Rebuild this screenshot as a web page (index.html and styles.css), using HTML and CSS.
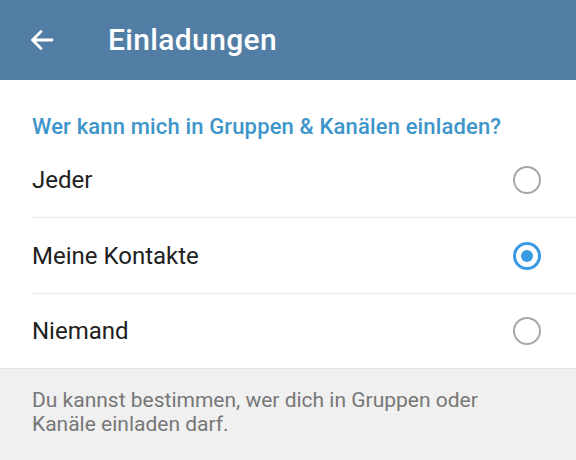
FILE: index.html
```html
<!DOCTYPE html>
<html lang="de">
<head>
<meta charset="utf-8">
<title>Einladungen</title>
<link rel="stylesheet" href="styles.css">
</head>
<body>
  <header class="appbar">
    <button class="back" aria-label="Zurück">
      <svg width="26" height="26" viewBox="0 0 26 26"><path d="M23 13H3.5M12 4.5 3.5 13l8.5 8.5" fill="none" stroke="#fff" stroke-width="2.8" stroke-linecap="round" stroke-linejoin="round"/></svg>
    </button>
    <h1 class="title">Einladungen</h1>
  </header>

  <section class="card">
    <h2 class="section-title">Wer kann mich in Gruppen &amp; Kanälen einladen?</h2>
    <ul class="options">
      <li class="option"><span class="label">Jeder</span><span class="radio"></span></li>
      <li class="option"><span class="label">Meine Kontakte</span><span class="radio checked"></span></li>
      <li class="option"><span class="label">Niemand</span><span class="radio"></span></li>
    </ul>
  </section>

  <p class="hint">Du kannst bestimmen, wer dich in Gruppen oder<br>Kanäle einladen darf.</p>
</body>
</html>
```

FILE: styles.css
```css
html, body {
  margin: 0;
  padding: 0;
}
body {
  width: 576px;
  height: 460px;
  overflow: hidden;
  background: #f0f0f0;
  font-family: Roboto, "Noto Sans", sans-serif;
}

.appbar {
  height: 80px;
  background: #527ea5;
  display: flex;
  align-items: center;
  padding-left: 29px;
  box-sizing: border-box;
}
.back {
  border: 0;
  background: none;
  padding: 0;
  width: 26px;
  height: 26px;
  display: flex;
}
.title {
  margin: -2px 0 0 53px;
  color: #fff;
  font-size: 30px;
  font-weight: 500;
  letter-spacing: 0.35px;
}

.card {
  background: #fff;
  border-bottom: 1px solid #e6e6e6;
}
.section-title {
  margin: 0;
  padding: 32px 32px 0;
  height: 30px;
  color: #3d95c9;
  font-size: 22px;
  font-weight: 500;
  line-height: 30px;
  letter-spacing: 0.15px;
}
.options {
  list-style: none;
  margin: 0;
  padding: 0;
}
.option {
  height: 75px;
  margin-left: 32px;
  padding-right: 35px;
  display: flex;
  align-items: center;
  justify-content: space-between;
  border-bottom: 1px solid #ececec;
}
.option:last-child {
  height: 74px;
  border-bottom: 0;
}
.label {
  color: #212121;
  font-size: 24px;
}
.radio {
  width: 28px;
  height: 28px;
  box-sizing: border-box;
  border-radius: 50%;
  border: 2.5px solid #a8a8a8;
  display: flex;
  align-items: center;
  justify-content: center;
}
.radio.checked {
  border: 3px solid #3a9be2;
}
.radio.checked::after {
  content: "";
  width: 12px;
  height: 12px;
  border-radius: 50%;
  background: #3a9be2;
}

.hint {
  margin: 0;
  padding: 19px 32px 0;
  color: #777;
  font-size: 21px;
  line-height: 24px;
}
```
